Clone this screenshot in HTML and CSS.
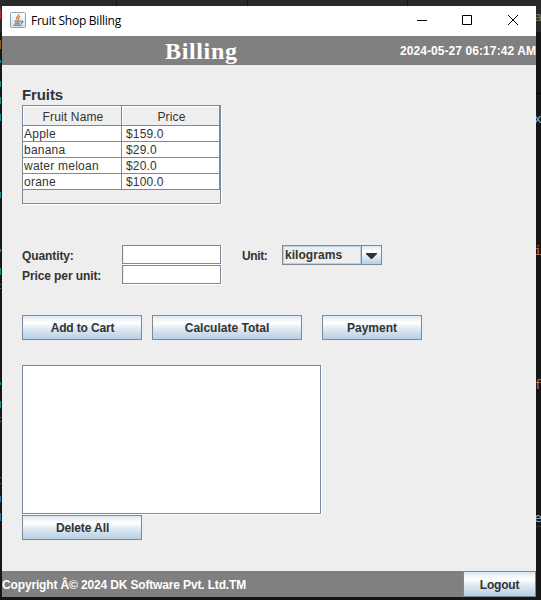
FILE: index.html
```html
<!DOCTYPE html>
<html lang="en">
<head>
<meta charset="utf-8">
<title>Fruit Shop Billing</title>
<link rel="stylesheet" href="styles.css">
</head>
<body>
<div class="desktop" aria-hidden="true">
  <svg width="541" height="600" viewBox="0 0 541 600">
    <path fill="#292929" d="M0 0H541V32H0z"/>
    <path stroke="#181818" d="M116.500 0V6M247.500 0V6M407.500 0V6"/>
    <path stroke="#050505" d="M536 93.500H541"/>
    <path stroke="#333" d="M536 526.500H541"/>
    <path fill="#b52a32" d="M0 9H1V19H0z"/>
    <path fill="#8b691b" d="M0 40H1V49H0z"/>
    <path fill="#148f91" d="M0 60H1V63H0zM0 81H1V87H0zM0 97H1V104H0zM0 114H1V121H0zM0 192H1V198H0zM0 249H1V252H0zM0 268H1V275H0zM0 382H1V385H0zM0 401H1V408H0z"/>
    <path fill="#2c72a0" d="M0 496H1V502H0zM0 513H1V521H0z"/>
    <path fill="#815576" d="M0 284H1V285H0zM0 288H1V289H0zM0 417H1V418H0zM0 421H1V422H0zM0 477H1V478H0zM0 483H1V484H0z"/>
  </svg>
  <span class="code code-a">a</span>
  <span class="code code-x">x</span>
  <span class="code code-i">i</span>
  <span class="code code-f">f</span>
  <span class="code code-e">e</span>
</div>
<div class="window">
  <div class="titlebar">
    <svg class="java" width="16" height="16" viewBox="0 0 16 16" fill="none">
      <defs><linearGradient id="tile" x2="0" y2="1"><stop stop-color="#fff"/><stop offset="1" stop-color="#d6dfe5"/></linearGradient></defs>
      <rect x=".5" y=".5" width="15" height="15" rx="1" fill="url(#tile)" stroke="#8fa3b1"/>
      <path d="M8.800 2C9.200 4 5.900 4.500 6.700 6.500L7.700 8M10 4.500C7.500 5.500 9.500 6.500 8 8" stroke="#ee8128" stroke-width="1.400"/>
      <path d="M4.500 9.200H10.500M5 11.200H9.800M3.500 13.200H11.500M11 9C13.500 8.600 13 11 10.800 11.300" stroke="#567a94" stroke-width="1.200"/>
    </svg>
    <span class="caption">Fruit Shop Billing</span>
    <div class="controls">
      <svg width="10" height="10" viewBox="0 0 10 10"><path d="M0 5.500H10" stroke="#000"/></svg>
      <svg width="10" height="10" viewBox="0 0 10 10"><path d="M.5 .5H9.500V9.500H.5z" fill="none" stroke="#000"/></svg>
      <svg width="10" height="10" viewBox="0 0 10 10"><path d="M0 0L10 10M10 0L0 10" stroke="#000"/></svg>
    </div>
  </div>
  <header class="banner">
    <h1>Billing</h1>
    <span class="clock">2024-05-27 06:17:42 AM</span>
  </header>
  <main class="content">
    <h2>Fruits</h2>
    <div class="scrollpane">
      <div class="grid">
        <span class="th">Fruit Name</span><span class="th">Price</span>
        <span class="td name">Apple</span><span class="td price">$159.0</span>
        <span class="td name">banana</span><span class="td price">$29.0</span>
        <span class="td name">water meloan</span><span class="td price">$20.0</span>
        <span class="td name">orane</span><span class="td price">$100.0</span>
      </div>
    </div>
    <div class="form">
      <span class="label">Quantity:</span><div class="field"></div><span class="label unit">Unit:</span>
      <div class="combo"><span class="choice">kilograms</span><span class="arrow"><svg width="11" height="6" viewBox="0 0 11 6"><path d="M0 0H11V1L6 6H5L0 1z" fill="#333"/></svg></span></div>
      <span class="label">Price per unit:</span><div class="field"></div>
    </div>
    <div class="actions">
      <button class="btn add"><span>Add to Cart</span></button>
      <button class="btn total"><span>Calculate Total</span></button>
      <button class="btn pay"><span>Payment</span></button>
    </div>
    <div class="cart"></div>
    <button class="btn delete"><span>Delete All</span></button>
  </main>
  <footer class="footer">
    <span class="copyright">Copyright Â© 2024 DK Software Pvt. Ltd.TM</span>
    <button class="btn logout"><span>Logout</span></button>
  </footer>
</div>
</body>
</html>
```
FILE: styles.css
```css
* { box-sizing: border-box; }
body { margin: 0; width: 541px; height: 600px; overflow: hidden; padding: 6px 0 0 2px; background: #161616; color: #333; font: bold 12px/15px "Liberation Sans", Arial, sans-serif; }
.desktop { position: absolute; inset: 0; overflow: hidden; }
.desktop svg { display: block; }
.code { position: absolute; left: 534px; font: 13px/15px "DejaVu Sans Mono", monospace; }
.code-a { top: 9px; color: #777; }
.code-x { top: 111px; color: #69b9df; }
.code-i { top: 243px; color: #b77655; }
.code-f { top: 377px; color: #b77655; }
.code-e { top: 510px; color: #74b4e8; }
.window { position: relative; display: flex; flex-direction: column; width: 534px; height: 591px; background: #eee; }
.titlebar { display: flex; align-items: center; height: 30px; flex: none; background: #fff; padding-left: 8px; color: #000; }
.java { margin-top: -2px; }
.caption { margin: 0 0 0 5px; font: 12px/16px "Open Sans", sans-serif; letter-spacing: -.24px; }
.controls { display: flex; gap: 35.500px; margin-left: auto; padding-right: 18px; margin-top: -2px; }
.controls svg:nth-child(2) { margin: 0 .5px 0 -.5px; }
.banner { display: flex; align-items: center; height: 29px; flex: none; background: #808080; color: #fff; }
h1 { margin: 0 0 0 163px; font: bold 24px/28px "Liberation Serif", serif; letter-spacing: .65px; }
.clock { margin: 1px 0 0 auto; white-space: nowrap; letter-spacing: .08px; }
.content { flex: 1; padding: 21px 20px 0; }
h2 { margin: 0; height: 19px; font: bold 15px/17px "Liberation Sans", sans-serif; letter-spacing: -.1px; }
.scrollpane { width: 199px; height: 99px; border: 1px solid #7a8a99; box-shadow: 1px 1px #fff; }
.grid { display: grid; grid-template-columns: 99px 98px; grid-template-rows: 20px repeat(4, 16px); font-weight: normal; }
.th { border: solid #7a8a99; border-width: 0 1px 1px 0; box-shadow: inset 1px 1px #fff; text-align: center; line-height: 22px; padding-left: 2px; letter-spacing: .15px; }
.td { border: solid #7a8a99; border-width: 0 1px 1px 0; background: #fff; line-height: 16px; padding-left: 1px; white-space: nowrap; }
.name { letter-spacing: .23px; }
.price { padding-left: 4px; letter-spacing: .15px; }
.form { display: grid; grid-template-columns: 100px 120px 40px 100px; grid-template-rows: 20px 20px; margin-top: 41px; }
.label { line-height: 22px; letter-spacing: -.1px; }
.unit { letter-spacing: -.4px; }
.field { width: 99px; height: 19px; border: 1px solid #7a8a99; background: #fff; box-shadow: 1px 1px #fff, inset 1px 0 #eee; }
.combo { display: flex; border: 1px solid #7a8a99; height: 20px; }
.choice { flex: 1; padding-left: 1px; border: 1px solid #b8cfe5; line-height: 17px; letter-spacing: .05px; }
.arrow { display: flex; align-items: center; justify-content: center; width: 20px; padding-top: 2px; border-left: 1px solid #7a8a99; background: linear-gradient(#dde8f3, #fff 30%, #b8cfe5); }
.btn { display: flex; align-items: center; justify-content: center; height: 25px; padding: 2px 0 0; border: 1px solid #7a8a99; border-radius: 0; font: inherit; color: inherit; white-space: nowrap; background: linear-gradient(#dde8f3, #fff 30%, #dbe6f1 60%, #b8cfe5); }
.actions { display: flex; margin-top: 30px; }
.add { width: 120px; margin-right: 10px; padding-left: 1px; letter-spacing: -.15px; }
.total { width: 150px; margin-right: 20px; }
.pay { width: 100px; }
.cart { width: 299px; height: 149px; margin: 25px 0 1px; background: #fff; border: 1px solid #7a8a99; box-shadow: 1px 1px #fff; }
.delete { width: 120px; padding-left: 1px; letter-spacing: -.1px; }
.footer { display: flex; align-items: center; justify-content: space-between; height: 26px; flex: none; background: #808080; color: #fff; }
.copyright { padding-top: 2px; white-space: nowrap; letter-spacing: -.15px; }
.logout { width: 73px; height: 26px; color: #333; letter-spacing: -.2px; }
```
